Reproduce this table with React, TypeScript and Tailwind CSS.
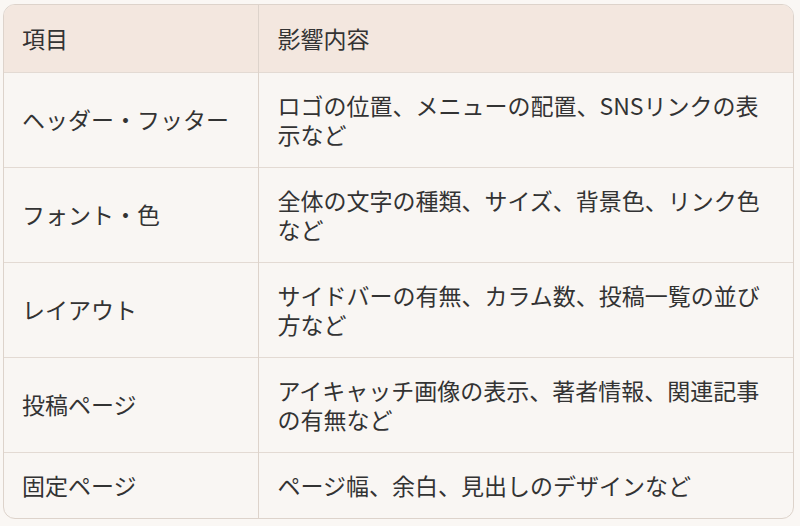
import React from 'react';

const rows = [
  { item: 'ヘッダー・フッター', effect: 'ロゴの位置、メニューの配置、SNSリンクの表示など' },
  { item: 'フォント・色', effect: '全体の文字の種類、サイズ、背景色、リンク色など' },
  { item: 'レイアウト', effect: 'サイドバーの有無、カラム数、投稿一覧の並び方など' },
  { item: '投稿ページ', effect: 'アイキャッチ画像の表示、著者情報、関連記事の有無など' },
  { item: '固定ページ', effect: 'ページ幅、余白、見出しのデザインなど' },
];

export default function App() {
  return (
    <div
      className="w-[800px] h-[526px] bg-[#faf7f4] pt-[4px] pl-[3px] text-[#333] text-[23px] leading-[29px]"
      style={{ fontFamily: '"Noto Sans CJK JP", "Noto Sans", sans-serif' }}
    >
      <div className="w-[791px] overflow-hidden rounded-[12px] border border-[#ddd3cb] bg-[#f9f6f3]">
        <table className="w-full border-collapse">
          <thead>
            <tr className="bg-[#f3e7df]">
              <th className="w-[254px] h-[67px] px-[18px] text-left font-normal border-r border-[#ddd3cb]">項目</th>
              <th className="h-[67px] px-[19px] text-left font-normal">影響内容</th>
            </tr>
          </thead>
          <tbody>
            {rows.map((r, i) => (
              <tr key={r.item} className="border-t border-[#e3dad3]">
                <td className={`px-[18px] border-r border-[#ddd3cb] ${i === rows.length - 1 ? 'h-[66px]' : 'h-[95px]'}`}>
                  {r.item}
                </td>
                <td className="pl-[19px] pr-[24px]">{r.effect}</td>
              </tr>
            ))}
          </tbody>
        </table>
      </div>
    </div>
  );
}
